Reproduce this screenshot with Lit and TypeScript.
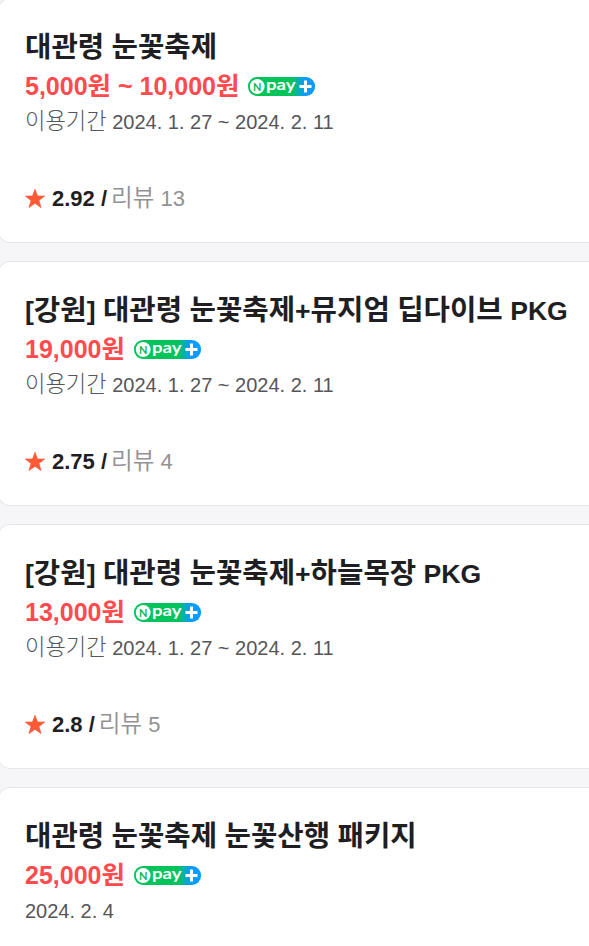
import { LitElement, html, css, nothing } from "lit";
import { customElement, property } from "lit/decorators.js";

interface Ticket {
  title: string;
  price: string;
  period: string;
  score?: string;
  reviews?: string;
}

const tickets: Ticket[] = [
  { title: "대관령 눈꽃축제", price: "5,000원 ~ 10,000원", period: "이용기간 2024. 1. 27 ~ 2024. 2. 11", score: "2.92", reviews: "13" },
  { title: "[강원] 대관령 눈꽃축제+뮤지엄 딥다이브 PKG", price: "19,000원", period: "이용기간 2024. 1. 27 ~ 2024. 2. 11", score: "2.75", reviews: "4" },
  { title: "[강원] 대관령 눈꽃축제+하늘목장 PKG", price: "13,000원", period: "이용기간 2024. 1. 27 ~ 2024. 2. 11", score: "2.8", reviews: "5" },
  { title: "대관령 눈꽃축제 눈꽃산행 패키지", price: "25,000원", period: "2024. 2. 4" },
];

// Hangul runs are set slightly larger than the Latin text around them.
const mixed = (text: string) =>
  text.split(/([가-힣]+)/).map((part) => (/[가-힣]/.test(part) ? html`<span class="ko">${part}</span>` : part));

@customElement("npay-badge")
class NpayBadge extends LitElement {
  static styles = css`
    :host { display: block; width: 67px; height: 19px; }
    svg { display: block; overflow: visible; }
    text { font-family: Lato, "Open Sans", sans-serif; font-weight: 700; }
  `;
  render() {
    return html`<svg width="67" height="19" viewBox="0 0 67 19">
      <defs>
        <linearGradient id="g" x1="0" x2="1" y1="0" y2="0">
          <stop offset="0.66" stop-color="#03c45b" />
          <stop offset="0.84" stop-color="#0a9bff" />
        </linearGradient>
      </defs>
      <rect width="67" height="19" rx="9" fill="url(#g)" />
      <circle cx="9.2" cy="9.5" r="7.4" fill="#fff" />
      <text x="5" y="13.6" font-size="11.5" font-weight="900" textLength="8.4" lengthAdjust="spacingAndGlyphs" fill="#03b857">N</text>
      <text x="18" y="12.7" font-size="15.5" textLength="29.5" lengthAdjust="spacingAndGlyphs" fill="#fff">pay</text>
      <path d="M57.5 3.5v12M51.5 9.5h12" stroke="#fff" stroke-width="3" />
    </svg>`;
  }
}

@customElement("ticket-card")
class TicketCard extends LitElement {
  @property({ attribute: false }) ticket!: Ticket;

  static styles = css`
    :host { display: block; box-sizing: border-box; height: 245px; padding: 28px 12px 0 26px; background: #fff; border: 1px solid #e5e7ea; border-radius: 12px; white-space: nowrap; }
    .title { height: 40px; line-height: 40px; font-size: 26.6px; font-weight: 700; color: #1e1e23; }
    .title .ko { font-size: 28.7px; }
    .price { display: flex; align-items: center; height: 38px; gap: 9px; }
    .amount { line-height: 38px; font-size: 25px; font-weight: 700; color: #ff4a4e; }
    .amount .ko { font-size: 25.5px; }
    .period { height: 34px; line-height: 34px; font-size: 20px; color: #55565a; }
    .period .ko { font-size: 22.2px; font-weight: 300; }
    .rating { display: flex; align-items: center; height: 34px; margin-top: 42px; font-size: 22px; line-height: 34px; color: #929294; }
    .star { display: block; margin-right: 7px; }
    .score { margin-right: 4px; padding-top: 1px; font-weight: 700; color: #1e1e23; }
    .rating .ko { font-size: 23.6px; font-weight: 350; }
  `;
  render() {
    const t = this.ticket;
    return html`
      <div class="title">${mixed(t.title)}</div>
      <div class="price"><span class="amount">${mixed(t.price)}</span><npay-badge></npay-badge></div>
      <div class="period">${mixed(t.period)}</div>
      ${t.score
        ? html`<div class="rating">
            <svg class="star" width="20" height="19" viewBox="0 0 20 19">
              <path fill="#ff5a36" stroke="#ff5a36" stroke-width="0.8" stroke-linejoin="round" d="M10 .4l2.5 6.7h7.1l-5.7 4.4 2.1 7-6-4.2-6 4.2 2.1-7L.4 7.1h7.1z" />
            </svg>
            <span class="score">${t.score} /</span>
            <span>${mixed(`리뷰 ${t.reviews}`)}</span>
          </div>`
        : nothing}
    `;
  }
}

@customElement("app-root")
class AppRoot extends LitElement {
  static styles = css`
    :host { display: block; box-sizing: border-box; height: 946px; overflow: hidden; background: #f6f6f9; font-family: "Liberation Sans", "Noto Sans CJK KR", sans-serif; }
    .list { display: flex; flex-direction: column; gap: 18px; margin: -2px -12px 0 -2px; }
  `;
  render() {
    return html`<div class="list">${tickets.map((t) => html`<ticket-card .ticket=${t}></ticket-card>`)}</div>`;
  }
}
